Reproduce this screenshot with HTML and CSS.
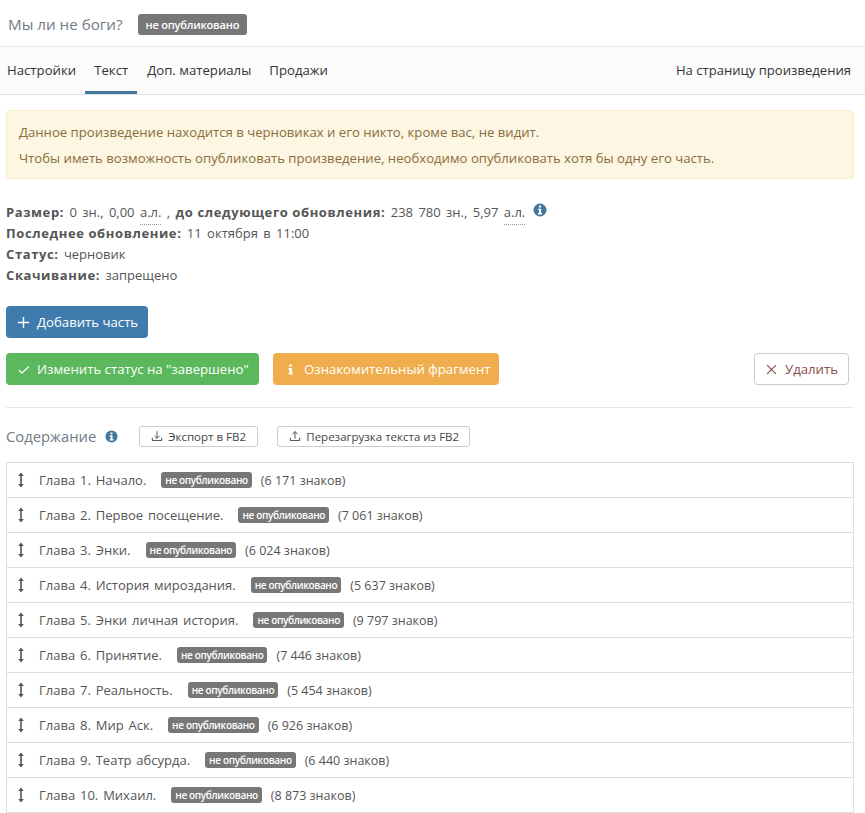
FILE: index.html
```html
<!DOCTYPE html>
<html lang="ru">
<head>
<meta charset="utf-8">
<title>Мы ли не боги?</title>
<link rel="stylesheet" href="styles.css">
</head>
<body>
<header class="head">
  <h1 class="title">Мы ли не боги?</h1>
  <span class="label label-lg">не опубликовано</span>
</header>
<nav class="tabs">
  <a class="tab">Настройки</a>
  <a class="tab active">Текст</a>
  <a class="tab">Доп. материалы</a>
  <a class="tab">Продажи</a>
  <a class="tab tab-right">На страницу произведения</a>
</nav>
<main class="main">
  <div class="alert">
    <p>Данное произведение находится в черновиках и его никто, кроме вас, не видит.</p>
    <p>Чтобы иметь возможность опубликовать произведение, необходимо опубликовать хотя бы одну его часть.</p>
  </div>
  <div class="stats">
    <div><b>Размер:</b> 0 зн., 0,00 <span class="dotted">а.л.</span> , <b>до следующего обновления:</b> 238 780 зн., 5,97 <span class="dotted">а.л.</span> <svg class="info info-stat" viewBox="0 0 14 14"><use href="#i-info"/></svg></div>
    <div><b>Последнее обновление:</b> 11 октября в 11:00</div>
    <div><b>Статус:</b> черновик</div>
    <div><b>Скачивание:</b> запрещено</div>
  </div>
  <div class="btn-row first">
    <button class="btn btn-blue"><svg class="ic" viewBox="0 0 14 14"><path d="M7 1v12M1 7h12" fill="none" stroke="currentColor" stroke-width="1.5"/></svg>Добавить часть</button>
  </div>
  <div class="btn-row second">
    <button class="btn btn-green"><svg class="ic" viewBox="0 0 14 14"><path d="M2 7.500l3.400 3.400L12.500 3.800" fill="none" stroke="currentColor" stroke-width="1.4"/></svg>Изменить статус на "завершено"</button>
    <button class="btn btn-orange"><svg class="ic" viewBox="0 0 14 14"><path d="M5.600 1.500h3v2.400h-3zM4.800 5.400h3.800v5.600h1v1.500H4.800V11h1V6.900h-1z" fill="currentColor"/></svg>Ознакомительный фрагмент</button>
    <button class="btn btn-del"><svg class="ic" viewBox="0 0 14 14"><path d="M2.200 2.200l9.600 9.600M11.800 2.200l-9.600 9.600" fill="none" stroke="currentColor" stroke-width="1.2"/></svg>Удалить</button>
  </div>
  <hr class="rule">
  <div class="toc-head">
    <span class="toc-title">Содержание</span>
    <svg class="info info-toc" viewBox="0 0 14 14"><use href="#i-info"/></svg>
    <button class="btn-sm"><svg class="ic-sm" viewBox="0 0 14 14"><path d="M7 1.500v8M4 6.800l3 3 3-3M1.500 9v3.200h11V9" fill="none" stroke="currentColor" stroke-width="1.1"/></svg>Экспорт в FB2</button>
    <button class="btn-sm btn-sm2"><svg class="ic-sm" viewBox="0 0 14 14"><path d="M7 10V2M4 4.800l3-3 3 3M1.500 9v3.200h11V9" fill="none" stroke="currentColor" stroke-width="1.1"/></svg>Перезагрузка текста из FB2</button>
  </div>
  <ul class="list">
    <li class="row"><svg class="arrows" viewBox="0 0 8 16"><use href="#i-arrows"/></svg><span class="name">Глава 1. Начало.</span><span class="label">не опубликовано</span><span class="count">(6 171 знаков)</span></li>
    <li class="row"><svg class="arrows" viewBox="0 0 8 16"><use href="#i-arrows"/></svg><span class="name">Глава 2. Первое посещение.</span><span class="label">не опубликовано</span><span class="count">(7 061 знаков)</span></li>
    <li class="row"><svg class="arrows" viewBox="0 0 8 16"><use href="#i-arrows"/></svg><span class="name">Глава 3. Энки.</span><span class="label">не опубликовано</span><span class="count">(6 024 знаков)</span></li>
    <li class="row"><svg class="arrows" viewBox="0 0 8 16"><use href="#i-arrows"/></svg><span class="name">Глава 4. История мироздания.</span><span class="label">не опубликовано</span><span class="count">(5 637 знаков)</span></li>
    <li class="row"><svg class="arrows" viewBox="0 0 8 16"><use href="#i-arrows"/></svg><span class="name">Глава 5. Энки личная история.</span><span class="label">не опубликовано</span><span class="count">(9 797 знаков)</span></li>
    <li class="row"><svg class="arrows" viewBox="0 0 8 16"><use href="#i-arrows"/></svg><span class="name">Глава 6. Принятие.</span><span class="label">не опубликовано</span><span class="count">(7 446 знаков)</span></li>
    <li class="row"><svg class="arrows" viewBox="0 0 8 16"><use href="#i-arrows"/></svg><span class="name">Глава 7. Реальность.</span><span class="label">не опубликовано</span><span class="count">(5 454 знаков)</span></li>
    <li class="row"><svg class="arrows" viewBox="0 0 8 16"><use href="#i-arrows"/></svg><span class="name">Глава 8. Мир Аск.</span><span class="label">не опубликовано</span><span class="count">(6 926 знаков)</span></li>
    <li class="row"><svg class="arrows" viewBox="0 0 8 16"><use href="#i-arrows"/></svg><span class="name">Глава 9. Театр абсурда.</span><span class="label">не опубликовано</span><span class="count">(6 440 знаков)</span></li>
    <li class="row"><svg class="arrows" viewBox="0 0 8 16"><use href="#i-arrows"/></svg><span class="name">Глава 10. Михаил.</span><span class="label">не опубликовано</span><span class="count">(8 873 знаков)</span></li>
  </ul>
</main>
<svg class="defs" aria-hidden="true">
  <symbol id="i-info" viewBox="0 0 14 14"><path fill-rule="evenodd" d="M7 .5a6.500 6.500 0 1 0 0 13 6.500 6.500 0 0 0 0-13zM5.900 2.600h2.200v2H5.900zM5 5.700h3.100v4.300h1v1.400H5V10h1V7.100H5z" fill="currentColor"/></symbol>
  <symbol id="i-arrows" viewBox="0 0 8 16"><path d="M4 .5L6.800 4H4.800v8h2L4 15.500 1.200 12h2V4h-2z" fill="currentColor"/></symbol>
</svg>
</body>
</html>
```
FILE: styles.css
```css
* { box-sizing: border-box; }
html, body { margin: 0; padding: 0; }
body {
  width: 865px;
  height: 813px;
  overflow: hidden;
  background: #fff;
  color: #555;
  font-family: "Open Sans", "Noto Sans", sans-serif;
  font-size: 13.200px;
  line-height: 21px;
}
.defs { position: absolute; width: 0; height: 0; }
.head {
  height: 47px;
  border-bottom: 1px solid #e8e8e8;
  display: flex;
  align-items: center;
  padding: 2px 0 0 8px;
}
.title {
  margin: 0 15px 0 0;
  font-size: 15.200px;
  font-weight: 400;
  color: #6f7b87;
}
.label {
  display: inline-block;
  background: #777;
  color: #fff;
  border-radius: 3px;
  font-size: 10px;
  font-weight: 600;
  letter-spacing: -.35px;
  line-height: 16px;
  height: 16px;
  padding: 0 4px;
  white-space: nowrap;
}
.label-lg {
  font-size: 11px;
  letter-spacing: -.2px;
  height: 21px;
  line-height: 21px;
  padding: 0 8px;
}
.tabs {
  height: 48px;
  background: #fcfcfc;
  border-bottom: 1px solid #e3e3e3;
  display: flex;
  padding-right: 14px;
}
.tab {
  color: #333;
  padding: 13px 9px 0;
  height: 47px;
}
.tab:first-child { padding-left: 7px; }
.tab.active { padding: 13px 9px 0; border-bottom: 3px solid #41779b; }
.tab.active + .tab { padding-left: 10px; }
.tab-right { margin-left: auto; padding-right: 0; font-size: 13.100px; }
.main { padding: 15px 11px 0 6px; }
.alert {
  background: #fcf6e3;
  border: 1px solid #faebcc;
  border-radius: 4px;
  color: #8a6d3b;
  font-size: 13.150px;
  height: 69px;
  padding: 11px 12px 0;
}
.alert p { margin: 0 0 5px; line-height: 21px; }
.stats { margin-top: 23px; font-size: 13px; word-spacing: 2px; }
.stats div { white-space: nowrap; }
.stats b { font-weight: 700; letter-spacing: .6px; word-spacing: 0; }
.dotted { border-bottom: 1px dotted #999; padding-bottom: 3px; }
.info { color: #41779b; }
.info-stat { width: 14px; height: 14px; margin-left: 2px; vertical-align: 0; }
.btn-row { display: flex; }
.btn-row.first { margin-top: 20px; }
.btn-row.second { margin-top: 15px; padding-right: 5px; }
.btn {
  height: 32px;
  display: inline-flex;
  align-items: center;
  border: 1px solid transparent;
  border-radius: 4px;
  color: #fff;
  font: inherit;
  padding: 0 10px;
  white-space: nowrap;
}
.ic { width: 13px; height: 13px; margin-right: 7px; flex: none; }
.btn-blue { background: #3f7cad; width: 142px; }
.btn-green { background: #5cb85c; width: 253px; }
.btn-orange { background: #f0ad4e; width: 226px; margin-left: 14px; }
.btn-del {
  margin-left: auto;
  background: #fff;
  border-color: #ccc;
  color: #8a4a4a;
  width: 95px;
}
.rule { border: 0; border-top: 1px solid #e8e8e8; margin: 22px 0 0; }
.toc-head { display: flex; align-items: center; margin-top: 17px; height: 22px; }
.toc-title { font-size: 14.800px; color: #6f7b87; }
.info-toc { width: 13px; height: 13px; margin-left: 9px; }
.btn-sm {
  height: 21px;
  margin-left: 21px;
  display: inline-flex;
  align-items: center;
  background: #fff;
  border: 1px solid #ccc;
  border-radius: 3px;
  color: #444;
  font: inherit;
  font-size: 11.500px;
  padding: 0 0 0 11px;
  width: 119px;
  white-space: nowrap;
}
.btn-sm2 { width: 193px; margin-left: 19px; }
.ic-sm { width: 12px; height: 12px; margin-right: 5px; flex: none; }
.list { list-style: none; margin: 15px 0 0; padding: 0; border-top: 1px solid #ddd; }
.row {
  height: 35px;
  border: 1px solid #ddd;
  border-top: 0;
  display: flex;
  align-items: center;
  padding-left: 10px;
}
.arrows { width: 8px; height: 16px; color: #555; margin-right: 14px; flex: none; }
.name { margin-right: 15px; font-size: 13px; word-spacing: 1.500px; }
.count { margin-left: 9px; font-size: 12.500px; }
```
